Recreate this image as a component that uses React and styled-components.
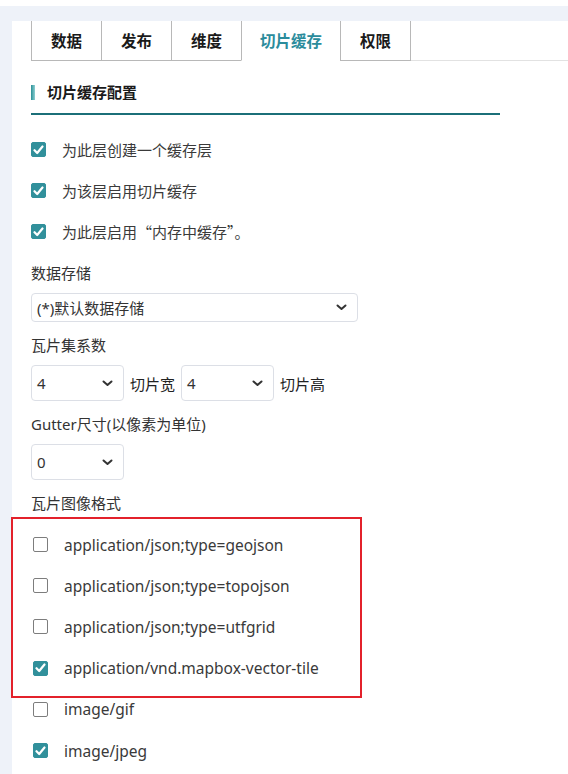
import React from "react";
import styled, { createGlobalStyle } from "styled-components";

const GlobalStyle = createGlobalStyle`
  html, body {
    margin: 0;
    padding: 0;
    background: #ffffff;
  }
  body {
    font-family: "Noto Sans", "Noto Sans CJK SC", sans-serif;
    color: #333;
  }
`;

const tabs = ["数据", "发布", "维度", "切片缓存", "权限"];

const layerOptions = [
  { label: "为此层创建一个缓存层", checked: true },
  { label: "为该层启用切片缓存", checked: true },
  { label: "为此层启用“内存中缓存”。", checked: true },
];

const formats = [
  { label: "application/json;type=geojson", checked: false },
  { label: "application/json;type=topojson", checked: false },
  { label: "application/json;type=utfgrid", checked: false },
  { label: "application/vnd.mapbox-vector-tile", checked: true },
  { label: "image/gif", checked: false },
  { label: "image/jpeg", checked: true },
];

function Chevron() {
  return (
    <svg width="11" height="7" viewBox="0 0 11 7">
      <path
        d="M1.5 1.5 L5.5 5 L9.5 1.5"
        fill="none"
        stroke="#333"
        strokeWidth="2"
        strokeLinecap="round"
        strokeLinejoin="round"
      />
    </svg>
  );
}

function CheckBox({ checked }) {
  return (
    <Box $checked={checked}>
      {checked && (
        <svg width="11" height="10" viewBox="0 0 11 10">
          <path
            d="M1.5 5.2 L4.2 8 L9.5 1.5"
            fill="none"
            stroke="#fff"
            strokeWidth="2.2"
            strokeLinecap="round"
            strokeLinejoin="round"
          />
        </svg>
      )}
    </Box>
  );
}

function Select({ value, width, height }) {
  return (
    <SelectBox $width={width} $height={height}>
      <span>{value}</span>
      <Chevron />
    </SelectBox>
  );
}

export default function App() {
  return (
    <>
      <GlobalStyle />
      <Page>
        <Panel>
          <TabBar>
            {tabs.map((t) => (
              <Tab key={t} $active={t === "切片缓存"}>
                {t}
              </Tab>
            ))}
            <TabFill />
          </TabBar>

          <SectionTitle>切片缓存配置</SectionTitle>

          <CheckList>
            {layerOptions.map((o) => (
              <CheckRow key={o.label}>
                <CheckBox checked={o.checked} />
                <span>{o.label}</span>
              </CheckRow>
            ))}
          </CheckList>

          <Label>数据存储</Label>
          <Select value="(*)默认数据存储" width={327} height={29} />

          <Label>瓦片集系数</Label>
          <InlineRow>
            <Select value="4" width={93} height={36} />
            <span>切片宽</span>
            <Select value="4" width={93} height={36} />
            <span>切片高</span>
          </InlineRow>

          <Label>Gutter尺寸(以像素为单位)</Label>
          <Select value="0" width={93} height={36} />

          <Label>瓦片图像格式</Label>
          <FormatList>
            <Highlight />
            {formats.map((f) => (
              <FormatRow key={f.label}>
                <CheckBox checked={f.checked} />
                <span>{f.label}</span>
              </FormatRow>
            ))}
          </FormatList>
        </Panel>
      </Page>
    </>
  );
}

const Page = styled.div`
  margin-top: 6px;
  background: #eef2f9;
  padding: 15px 0 0 12px;
  min-height: 768px;
  box-sizing: border-box;
`;

const Panel = styled.div`
  background: #ffffff;
  padding: 0 0 30px 19px;
  min-height: 753px;
  box-sizing: border-box;
`;

const TabBar = styled.div`
  display: flex;
  height: 40px;
`;

const Tab = styled.div`
  width: ${(p) => (p.$active ? "98px" : "69px")};
  display: flex;
  align-items: center;
  justify-content: center;
  font-size: 15.5px;
  font-weight: 700;
  color: ${(p) => (p.$active ? "#2b8c9c" : "#1a1a1a")};
  border-left: 1px solid #b8b8b8;
  border-bottom: 1px solid ${(p) => (p.$active ? "transparent" : "#b8b8b8")};
  &:nth-child(5) {
    border-right: 1px solid #b8b8b8;
  }
`;

const TabFill = styled.div`
  flex: 1;
  border-bottom: 1px solid #e2e2e2;
`;

const SectionTitle = styled.div`
  position: relative;
  width: 469px;
  box-sizing: border-box;
  margin-top: 20px;
  padding: 0 0 10px 16px;
  line-height: 22px;
  font-size: 15px;
  font-weight: 700;
  color: #1a1a1a;
  border-bottom: 2px solid #1b6f78;

  &::before {
    content: "";
    position: absolute;
    left: 0;
    top: 4px;
    width: 4px;
    height: 15px;
    background: linear-gradient(90deg, #2a8f96, #8fd0d2);
  }
`;

const CheckList = styled.div`
  margin-top: 14px;
  margin-bottom: -2px;
`;

const CheckRow = styled.div`
  display: flex;
  align-items: center;
  gap: 16px;
  height: 41px;
  font-family: "Noto Sans CJK SC", sans-serif;
  font-size: 15px;
  color: #3a3a3a;
`;

const Box = styled.span`
  width: 15px;
  height: 15px;
  box-sizing: border-box;
  border-radius: 2px;
  display: inline-flex;
  align-items: center;
  justify-content: center;
  flex-shrink: 0;
  background: ${(p) => (p.$checked ? "#31909b" : "#fff")};
  border: 1px solid ${(p) => (p.$checked ? "#31909b" : "#7d7d7d")};
`;

const Label = styled.div`
  margin-top: 12px;
  line-height: 22px;
  font-size: 15px;
  color: #333;
`;

const SelectBox = styled.div`
  margin-top: 9px;
  width: ${(p) => p.$width}px;
  height: ${(p) => p.$height}px;
  box-sizing: border-box;
  border: 1px solid #dcdfe6;
  border-radius: 4px;
  padding: 0 10px 0 5px;
  display: flex;
  align-items: center;
  justify-content: space-between;
  font-size: 15px;
  color: #333;
  background: #fff;
`;

const InlineRow = styled.div`
  display: flex;
  align-items: center;
  gap: 6px;
  font-size: 15px;
  color: #222;

  > span {
    margin-top: 9px;
  }
`;

const FormatList = styled.div`
  position: relative;
  margin-top: 10px;
  padding-left: 2px;
`;

const FormatRow = styled.div`
  display: flex;
  align-items: center;
  gap: 16px;
  height: 41.2px;
  font-size: 15.5px;
  color: #3a3a3a;
`;

const Highlight = styled.div`
  position: absolute;
  left: -20px;
  top: -7px;
  width: 351px;
  height: 181px;
  box-sizing: border-box;
  border: 2px solid #e3212b;
  pointer-events: none;
`;
